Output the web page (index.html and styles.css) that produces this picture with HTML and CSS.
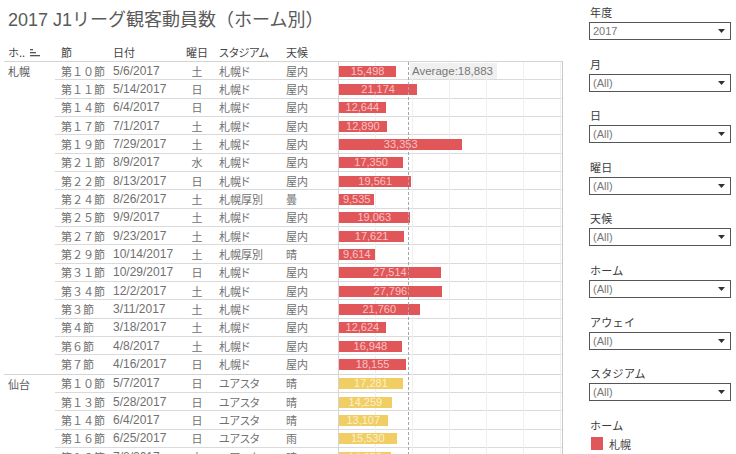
FILE: index.html
```html
<!DOCTYPE html>
<html lang="ja">
<head>
<meta charset="utf-8">
<title>2017 J1リーグ観客動員数（ホーム別）</title>
<link rel="stylesheet" href="styles.css">
</head>
<body>
<div class="page">
  <div class="main">
    <div class="title">2017 J1リーグ観客動員数（ホーム別）</div>
    <div class="table">
      <div class="head">
        <div class="hc hc-group">ホ.. <svg class="sort" width="12" height="8" viewBox="0 0 12 8"><rect x="1" y="0" width="3" height="1.3" fill="#555"/><rect x="1" y="3" width="6" height="1.3" fill="#555"/><rect x="1" y="6" width="10" height="1.3" fill="#555"/></svg></div>
        <div class="hc hc-set">節</div>
        <div class="hc hc-date">日付</div>
        <div class="hc hc-dow">曜日</div>
        <div class="hc hc-std">スタジアム</div>
        <div class="hc hc-wx">天候</div>
        <div class="hc hc-chart"></div>
      </div>

      <div class="group">
        <div class="glabel">札幌</div>
        <div class="grows">
          <div class="row"><span class="c-set">第１０節</span><span class="c-date">5/6/2017</span><span class="c-dow">土</span><span class="c-std">札幌ド</span><span class="c-wx">屋内</span><span class="c-chart"><span class="bar red" style="width:57.3px">15,498</span></span></div>
          <div class="row"><span class="c-set">第１１節</span><span class="c-date">5/14/2017</span><span class="c-dow">日</span><span class="c-std">札幌ド</span><span class="c-wx">屋内</span><span class="c-chart"><span class="bar red" style="width:78.3px">21,174</span></span></div>
          <div class="row"><span class="c-set">第１４節</span><span class="c-date">6/4/2017</span><span class="c-dow">日</span><span class="c-std">札幌ド</span><span class="c-wx">屋内</span><span class="c-chart"><span class="bar red" style="width:46.8px">12,644</span></span></div>
          <div class="row"><span class="c-set">第１７節</span><span class="c-date">7/1/2017</span><span class="c-dow">土</span><span class="c-std">札幌ド</span><span class="c-wx">屋内</span><span class="c-chart"><span class="bar red" style="width:47.7px">12,890</span></span></div>
          <div class="row"><span class="c-set">第１９節</span><span class="c-date">7/29/2017</span><span class="c-dow">土</span><span class="c-std">札幌ド</span><span class="c-wx">屋内</span><span class="c-chart"><span class="bar red" style="width:123.4px">33,353</span></span></div>
          <div class="row"><span class="c-set">第２１節</span><span class="c-date">8/9/2017</span><span class="c-dow">水</span><span class="c-std">札幌ド</span><span class="c-wx">屋内</span><span class="c-chart"><span class="bar red" style="width:64.2px">17,350</span></span></div>
          <div class="row"><span class="c-set">第２２節</span><span class="c-date">8/13/2017</span><span class="c-dow">日</span><span class="c-std">札幌ド</span><span class="c-wx">屋内</span><span class="c-chart"><span class="bar red" style="width:72.4px">19,561</span></span></div>
          <div class="row"><span class="c-set">第２４節</span><span class="c-date">8/26/2017</span><span class="c-dow">土</span><span class="c-std">札幌厚別</span><span class="c-wx">曇</span><span class="c-chart"><span class="bar red" style="width:35.3px">9,535</span></span></div>
          <div class="row"><span class="c-set">第２５節</span><span class="c-date">9/9/2017</span><span class="c-dow">土</span><span class="c-std">札幌ド</span><span class="c-wx">屋内</span><span class="c-chart"><span class="bar red" style="width:70.5px">19,063</span></span></div>
          <div class="row"><span class="c-set">第２７節</span><span class="c-date">9/23/2017</span><span class="c-dow">土</span><span class="c-std">札幌ド</span><span class="c-wx">屋内</span><span class="c-chart"><span class="bar red" style="width:65.2px">17,621</span></span></div>
          <div class="row"><span class="c-set">第２９節</span><span class="c-date">10/14/2017</span><span class="c-dow">土</span><span class="c-std">札幌厚別</span><span class="c-wx">晴</span><span class="c-chart"><span class="bar red" style="width:35.6px">9,614</span></span></div>
          <div class="row"><span class="c-set">第３１節</span><span class="c-date">10/29/2017</span><span class="c-dow">日</span><span class="c-std">札幌ド</span><span class="c-wx">屋内</span><span class="c-chart"><span class="bar red" style="width:101.8px">27,514</span></span></div>
          <div class="row"><span class="c-set">第３４節</span><span class="c-date">12/2/2017</span><span class="c-dow">土</span><span class="c-std">札幌ド</span><span class="c-wx">屋内</span><span class="c-chart"><span class="bar red" style="width:102.8px">27,796</span></span></div>
          <div class="row"><span class="c-set">第３節</span><span class="c-date">3/11/2017</span><span class="c-dow">土</span><span class="c-std">札幌ド</span><span class="c-wx">屋内</span><span class="c-chart"><span class="bar red" style="width:80.5px">21,760</span></span></div>
          <div class="row"><span class="c-set">第４節</span><span class="c-date">3/18/2017</span><span class="c-dow">土</span><span class="c-std">札幌ド</span><span class="c-wx">屋内</span><span class="c-chart"><span class="bar red" style="width:46.7px">12,624</span></span></div>
          <div class="row"><span class="c-set">第６節</span><span class="c-date">4/8/2017</span><span class="c-dow">土</span><span class="c-std">札幌ド</span><span class="c-wx">屋内</span><span class="c-chart"><span class="bar red" style="width:62.7px">16,948</span></span></div>
          <div class="row"><span class="c-set">第７節</span><span class="c-date">4/16/2017</span><span class="c-dow">日</span><span class="c-std">札幌ド</span><span class="c-wx">屋内</span><span class="c-chart"><span class="bar red" style="width:67.2px">18,155</span></span></div>
        </div>
      </div>

      <div class="group">
        <div class="glabel">仙台</div>
        <div class="grows">
          <div class="row"><span class="c-set">第１０節</span><span class="c-date">5/7/2017</span><span class="c-dow">日</span><span class="c-std">ユアスタ</span><span class="c-wx">晴</span><span class="c-chart"><span class="bar yellow" style="width:63.9px">17,281</span></span></div>
          <div class="row"><span class="c-set">第１３節</span><span class="c-date">5/28/2017</span><span class="c-dow">日</span><span class="c-std">ユアスタ</span><span class="c-wx">晴</span><span class="c-chart"><span class="bar yellow" style="width:52.8px">14,259</span></span></div>
          <div class="row"><span class="c-set">第１４節</span><span class="c-date">6/4/2017</span><span class="c-dow">日</span><span class="c-std">ユアスタ</span><span class="c-wx">晴</span><span class="c-chart"><span class="bar yellow" style="width:48.5px">13,107</span></span></div>
          <div class="row"><span class="c-set">第１６節</span><span class="c-date">6/25/2017</span><span class="c-dow">日</span><span class="c-std">ユアスタ</span><span class="c-wx">雨</span><span class="c-chart"><span class="bar yellow" style="width:57.5px">15,530</span></span></div>
          <div class="row"><span class="c-set">第１８節</span><span class="c-date">7/8/2017</span><span class="c-dow">土</span><span class="c-std">ユアスタ</span><span class="c-wx">晴</span><span class="c-chart"><span class="bar yellow" style="width:52px">14,052</span></span></div>
        </div>
      </div>

      <div class="avg-line"></div>
      <div class="avg-label">Average:18,883</div>
    </div>
  </div>

  <div class="side">
    <div class="filter"><div class="flabel">年度</div><div class="select"><span>2017</span><svg width="7" height="4" viewBox="0 0 7 4"><polygon points="0,0 7,0 3.5,4" fill="#333"/></svg></div></div>
    <div class="filter"><div class="flabel">月</div><div class="select"><span>(All)</span><svg width="7" height="4" viewBox="0 0 7 4"><polygon points="0,0 7,0 3.5,4" fill="#333"/></svg></div></div>
    <div class="filter"><div class="flabel">日</div><div class="select"><span>(All)</span><svg width="7" height="4" viewBox="0 0 7 4"><polygon points="0,0 7,0 3.5,4" fill="#333"/></svg></div></div>
    <div class="filter"><div class="flabel">曜日</div><div class="select"><span>(All)</span><svg width="7" height="4" viewBox="0 0 7 4"><polygon points="0,0 7,0 3.5,4" fill="#333"/></svg></div></div>
    <div class="filter"><div class="flabel">天候</div><div class="select"><span>(All)</span><svg width="7" height="4" viewBox="0 0 7 4"><polygon points="0,0 7,0 3.5,4" fill="#333"/></svg></div></div>
    <div class="filter"><div class="flabel">ホーム</div><div class="select"><span>(All)</span><svg width="7" height="4" viewBox="0 0 7 4"><polygon points="0,0 7,0 3.5,4" fill="#333"/></svg></div></div>
    <div class="filter"><div class="flabel">アウェイ</div><div class="select"><span>(All)</span><svg width="7" height="4" viewBox="0 0 7 4"><polygon points="0,0 7,0 3.5,4" fill="#333"/></svg></div></div>
    <div class="filter"><div class="flabel">スタジアム</div><div class="select"><span>(All)</span><svg width="7" height="4" viewBox="0 0 7 4"><polygon points="0,0 7,0 3.5,4" fill="#333"/></svg></div></div>
    <div class="legend">
      <div class="flabel">ホーム</div>
      <div class="litem"><span class="swatch"></span><span>札幌</span></div>
    </div>
  </div>
</div>
</body>
</html>
```

FILE: styles.css
```css
html, body {
  margin: 0;
  padding: 0;
  background: #fff;
}
body {
  width: 736px;
  height: 454px;
  overflow: hidden;
  font-family: "Liberation Sans", "Noto Sans CJK JP", sans-serif;
  color: #666;
}
.page {
  display: flex;
  width: 736px;
  height: 454px;
}
.main {
  width: 580px;
  flex: none;
  padding-left: 4px;
  box-sizing: border-box;
}
.title {
  height: 44px;
  box-sizing: border-box;
  padding: 8px 0 0 4px;
  font-size: 18px;
  line-height: 24px;
  color: #5a5a5a;
  white-space: nowrap;
}
.table {
  position: relative;
  width: 559px;
}
.head {
  display: grid;
  grid-template-columns: 51px 57px 69px 32px 68px 57px 225px;
  height: 18px;
  box-sizing: border-box;
  border-bottom: 1px solid #d4d4d4;
  font-size: 11px;
  color: #444;
  font-family: "Noto Sans CJK JP", sans-serif;
}
.hc {
  display: flex;
  align-items: center;
  white-space: nowrap;
  line-height: 17px;
}
.hc-group { padding-left: 4px; }
.sort { margin-left: 4px; }
.hc-set { padding-left: 6px; }
.hc-date { padding-left: 1px; }
.hc-dow { justify-content: center; }
.hc-std { padding-left: 6px; font-feature-settings: "palt"; }
.hc-wx { padding-left: 5px; }

.group {
  display: flex;
  border-bottom: 1px solid #d4d4d4;
}
.glabel {
  width: 51px;
  flex: none;
  box-sizing: border-box;
  padding-left: 4px;
  height: 18.33px;
  line-height: 18px;
  font-size: 11px;
  color: #5a5a5a;
  font-family: "Noto Sans CJK JP", sans-serif;
}
.grows {
  width: 508px;
  flex: none;
}
.row {
  display: grid;
  grid-template-columns: 57px 69px 32px 68px 57px 225px;
  height: 18.33px;
  box-sizing: border-box;
  border-bottom: 1px solid #dadada;
  font-size: 12px;
  color: #707070;
}
.row:last-child {
  border-bottom: none;
}
.row > span {
  display: flex;
  align-items: center;
  white-space: nowrap;
}
.c-set, .c-dow, .c-std, .c-wx {
  font-family: "Noto Sans CJK JP", sans-serif;
  font-size: 11px;
}
.c-set { padding-left: 6px; }
.c-date { padding-left: 1px; }
.c-dow { justify-content: center; }
.c-std { padding-left: 6px; font-feature-settings: "palt"; }
.c-wx { padding-left: 5px; }
.c-chart {
  box-sizing: border-box;
  border-left: 1px solid #d4d4d4;
  border-right: 1px solid #c8c8c8;
  background-image: repeating-linear-gradient(to right, transparent 0 36px, #efefef 36px 37px);
  margin-bottom: -1px;
}
.bar {
  height: 11px;
  display: flex;
  align-items: center;
  justify-content: center;
  font-size: 11px;
  line-height: 11px;
  white-space: nowrap;
  overflow: visible;
}
.bar.red {
  background: #e15759;
  color: rgba(255, 230, 230, 0.75);
}
.bar.yellow {
  background: #f1ce63;
  color: rgba(255, 250, 230, 0.8);
}
.avg-line {
  position: absolute;
  left: 404px;
  top: 18px;
  bottom: -20px;
  width: 1px;
  background: repeating-linear-gradient(to bottom, #a0a6ad 0 3px, transparent 3px 5px);
}
.avg-label {
  position: absolute;
  left: 406px;
  top: 19px;
  height: 16px;
  line-height: 16px;
  padding: 0 4px 0 2px;
  background: #f0f0f0;
  font-size: 11.5px;
  color: #777;
  white-space: nowrap;
}

.side {
  width: 156px;
  flex: none;
  padding: 4px 0 0 9px;
  box-sizing: border-box;
  display: flex;
  flex-direction: column;
  gap: 15.6px;
}
.filter {
  display: flex;
  flex-direction: column;
  gap: 2px;
}
.flabel {
  height: 16px;
  line-height: 16px;
  font-size: 11px;
  color: #3a3a3a;
  font-family: "Noto Sans CJK JP", sans-serif;
  padding-left: 1px;
  letter-spacing: 0.3px;
}
.select {
  width: 142px;
  height: 18px;
  box-sizing: border-box;
  border: 1px solid #555;
  background: #fff;
  display: flex;
  align-items: center;
  justify-content: space-between;
  padding: 0 5px 0 3px;
  font-size: 11px;
  color: #777;
}
.legend {
  display: flex;
  flex-direction: column;
  gap: 3px;
}
.litem {
  display: flex;
  align-items: center;
  gap: 6px;
  padding-left: 2px;
  font-size: 11px;
  color: #444;
  font-family: "Noto Sans CJK JP", sans-serif;
}
.swatch {
  width: 12px;
  height: 13px;
  background: #e15759;
}
```
